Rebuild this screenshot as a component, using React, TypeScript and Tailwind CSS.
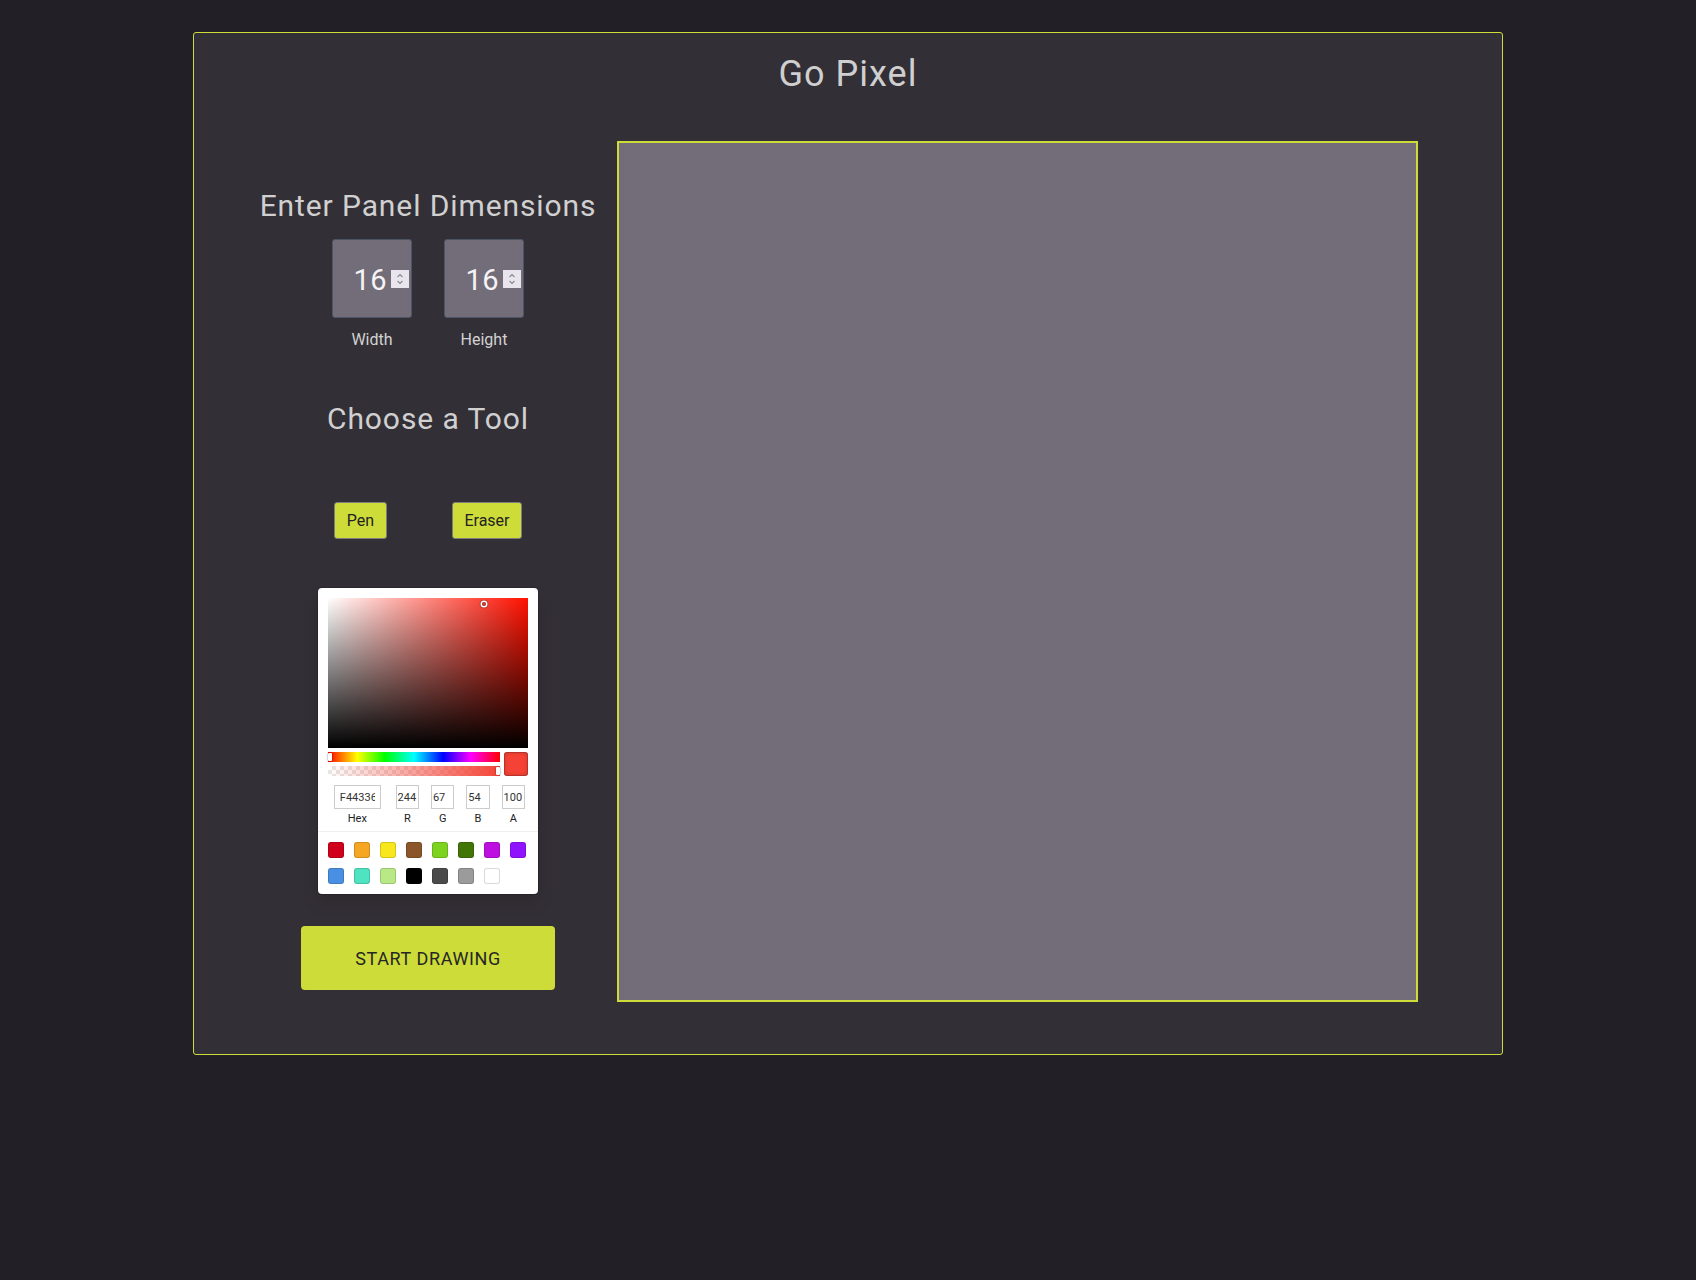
import React from "react";

const presets = [
  "#D0021B", "#F5A623", "#F8E71C", "#8B572A", "#7ED321", "#417505", "#BD10E0", "#9013FE",
  "#4A90E2", "#50E3C2", "#B8E986", "#000000", "#4A4A4A", "#9B9B9B", "#FFFFFF",
];

function Spinner() {
  return (
    <div className="w-[18px] h-[18px] bg-[#e8e6ec] flex items-center justify-center">
      <svg width="10" height="14" viewBox="0 0 10 14" fill="none" stroke="#8a8790" strokeWidth="1.2">
        <path d="M2.5 5 L5 2.5 L7.5 5" />
        <path d="M2.5 9 L5 11.5 L7.5 9" />
      </svg>
    </div>
  );
}

function NumBox({ label }: { label: string }) {
  return (
    <div className="flex flex-col items-center">
      <div className="w-[80px] h-[79px] bg-[#736d7a] border border-[#4b5566] rounded-[3px] flex items-center justify-end pr-[2px] gap-[4px]">
        <span className="mt-[3px] text-[29px] leading-[28px] text-[#f4f4f4] tracking-[0.5px]">16</span>
        <Spinner />
      </div>
      <div className="mt-[12px] text-[16px] leading-[20px] text-[#d2d2d2]">{label}</div>
    </div>
  );
}

function Field({ value, label, hex }: { value: string; label: string; hex?: boolean }) {
  return (
    <div className={hex ? "flex-[2] flex flex-col items-center" : "flex-1 pl-[6px] flex flex-col items-center"}>
      <input
        readOnly
        value={value}
        className="w-[80%] h-[24px] text-[11px] text-[#333] bg-white outline-none shadow-[inset_0_0_0_1px_#ccc] [font-family:Roboto,sans-serif]"
        style={hex ? { paddingLeft: "6px", paddingRight: "6px" } : { paddingLeft: "2px", paddingRight: "2px" }}
      />
      <div className="pt-[3px] pb-[6px] text-[11px] leading-[13px] text-[#222]">{label}</div>
    </div>
  );
}

function Picker() {
  return (
    <div className="w-[220px] bg-white rounded-[4px] p-[10px] pb-0 shadow-[0_0_0_1px_rgba(0,0,0,0.15),0_8px_16px_rgba(0,0,0,0.15)]">
      <div className="relative w-[200px] h-[150px] overflow-hidden bg-[hsl(4,100%,50%)]">
        <div className="absolute inset-0 bg-[linear-gradient(to_right,#fff,rgba(255,255,255,0))]" />
        <div className="absolute inset-0 bg-[linear-gradient(to_top,#000,rgba(0,0,0,0))]" />
        <div className="absolute left-[154px] top-[4px] w-[4px] h-[4px] rounded-full shadow-[0_0_0_1.5px_#fff,inset_0_0_1px_1px_rgba(0,0,0,0.3),0_0_1px_2px_rgba(0,0,0,0.4)]" />
      </div>
      <div className="flex">
        <div className="flex-1 py-[4px]">
          <div className="relative h-[10px] bg-[linear-gradient(to_right,#f00_0%,#ff0_17%,#0f0_33%,#0ff_50%,#00f_67%,#f0f_83%,#f00_100%)]">
            <div className="absolute left-0 top-[1px] w-[4px] h-[8px] rounded-[1px] bg-white shadow-[0_0_2px_rgba(0,0,0,0.6)]" />
          </div>
          <div className="relative h-[10px] mt-[4px] bg-[#fff] bg-[repeating-conic-gradient(#e6e6e6_0%_25%,#fff_0%_50%)] bg-[length:8px_8px]">
            <div className="absolute inset-0 bg-[linear-gradient(to_right,rgba(244,67,54,0),rgba(244,67,54,1))]" />
            <div className="absolute right-0 top-[1px] w-[4px] h-[8px] rounded-[1px] bg-white shadow-[0_0_2px_rgba(0,0,0,0.6)]" />
          </div>
        </div>
        <div className="w-[24px] h-[24px] mt-[4px] ml-[4px] rounded-[3px] bg-[#f44336] shadow-[inset_0_0_0_1px_rgba(0,0,0,0.15),inset_0_0_4px_rgba(0,0,0,0.25)]" />
      </div>
      <div className="flex pt-[5px]">
        <Field value="F44336" label="Hex" hex />
        <Field value="244" label="R" />
        <Field value="67" label="G" />
        <Field value="54" label="B" />
        <Field value="100" label="A" />
      </div>
      <div className="-mx-[10px] border-t border-[#eee] pt-[10px] pl-[10px] flex flex-wrap">
        {presets.map((c) => (
          <div
            key={c}
            className="w-[16px] h-[16px] mr-[10px] mb-[10px] rounded-[3px] shadow-[inset_0_0_0_1px_rgba(0,0,0,0.15)]"
            style={{ background: c }}
          />
        ))}
      </div>
    </div>
  );
}

export default function App() {
  return (
    <div className="min-h-[1280px] w-full bg-[#222026] [font-family:Roboto,'Noto_Sans',sans-serif]">
      <div className="pt-[32px] pl-[193px]">
        <div className="w-[1310px] h-[1023px] bg-[#332f36] border border-[#cddc39] rounded-[3px] flex flex-col">
          <h1 className="mt-[19px] text-center text-[36px] leading-[44px] tracking-[1px] text-[#cfcfcf]">Go Pixel</h1>
          <div className="mt-[45px] flex items-start pl-[65px]">
            <div className="w-[338px] pt-[47px] flex flex-col items-center">
              <h2 className="text-[30px] leading-[36px] tracking-[0.9px] text-[#d0d0d0] whitespace-nowrap">Enter Panel Dimensions</h2>
              <div className="mt-[15px] flex gap-[32px]">
                <NumBox label="Width" />
                <NumBox label="Height" />
              </div>
              <h2 className="mt-[51px] text-[30px] leading-[36px] tracking-[0.9px] text-[#d0d0d0]">Choose a Tool</h2>
              <div className="mt-[65px] flex gap-[65px]">
                <button className="h-[37px] w-[53px] bg-[#cddc39] border border-[#7d7d7d] rounded-[3px] text-[16px] text-[#222]">Pen</button>
                <button className="h-[37px] w-[70px] bg-[#cddc39] border border-[#7d7d7d] rounded-[3px] text-[16px] text-[#222]">Eraser</button>
              </div>
              <div className="mt-[49px]">
                <Picker />
              </div>
              <button className="mt-[32px] w-[254px] h-[64px] bg-[#cddc39] rounded-[4px] text-[18px] tracking-[0.6px] text-[#262626]">START DRAWING</button>
            </div>
            <div className="ml-[20px] w-[801px] h-[861px] border-2 border-[#cddc39] bg-[#736d7a]" />
          </div>
        </div>
      </div>
    </div>
  );
}
